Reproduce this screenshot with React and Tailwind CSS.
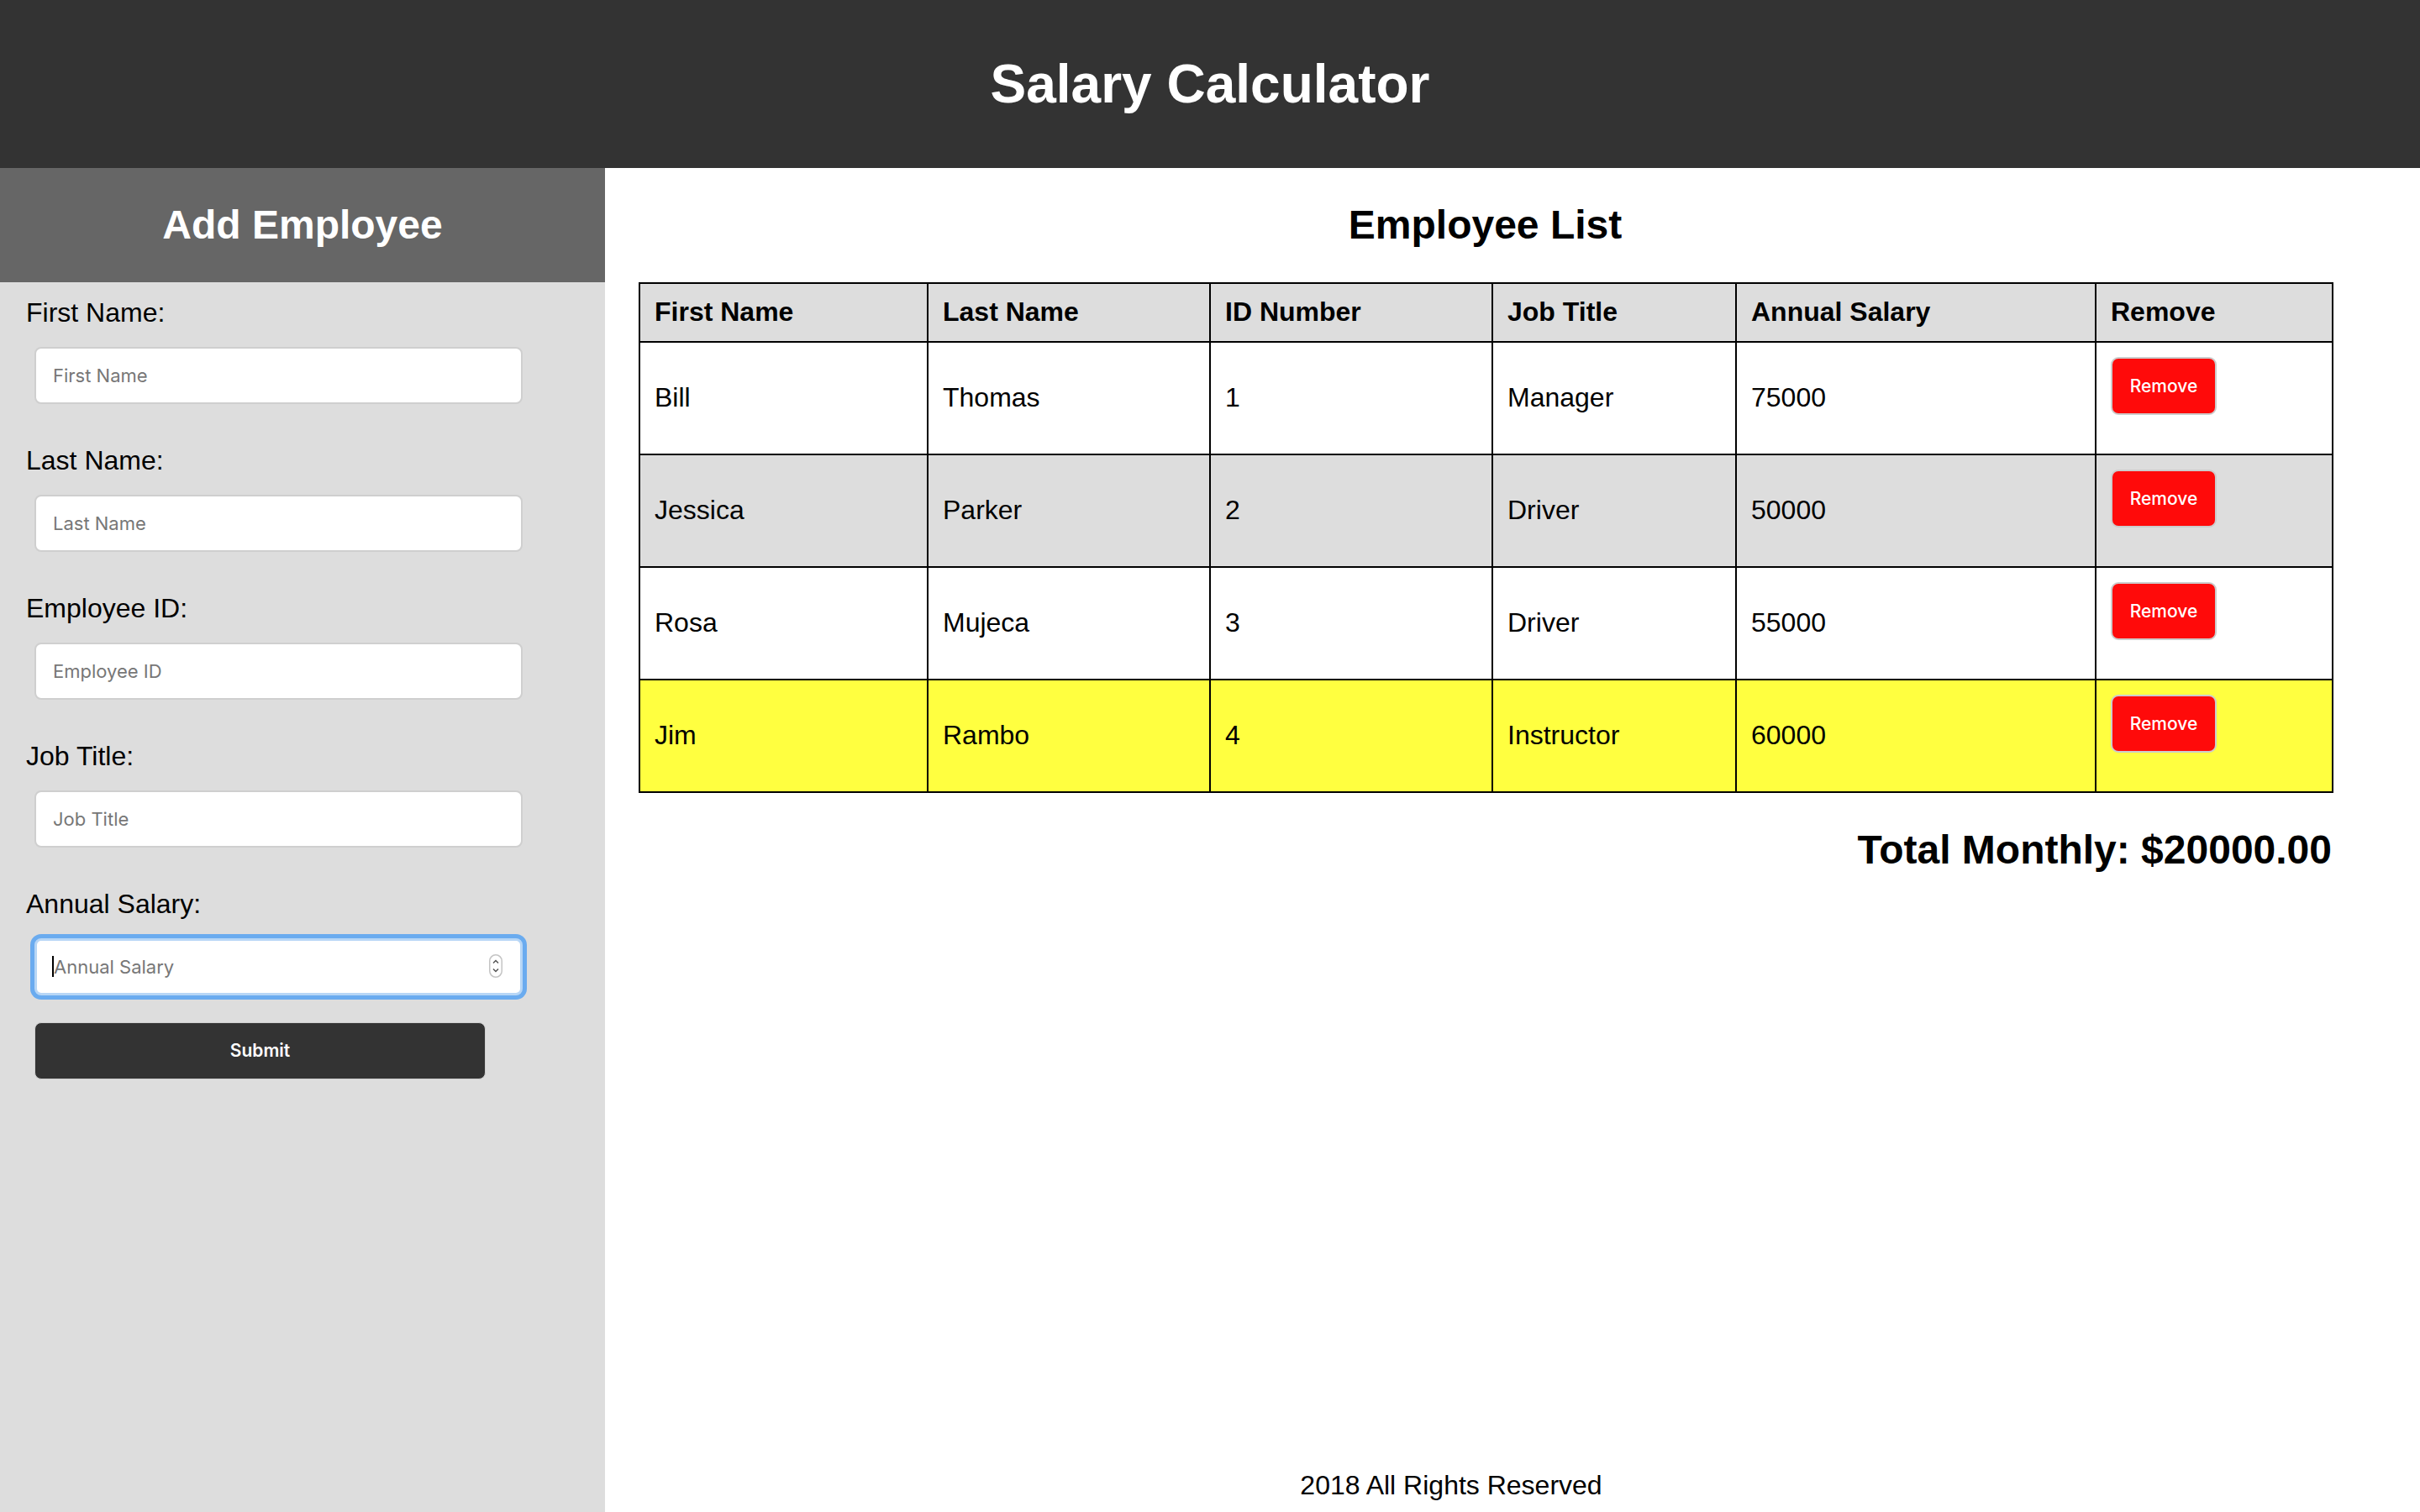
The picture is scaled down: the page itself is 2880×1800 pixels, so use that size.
import React from 'react';

const employees = [
  { first: 'Bill', last: 'Thomas', id: 1, title: 'Manager', salary: 75000, bg: 'bg-white' },
  { first: 'Jessica', last: 'Parker', id: 2, title: 'Driver', salary: 50000, bg: 'bg-[#dddddd]' },
  { first: 'Rosa', last: 'Mujeca', id: 3, title: 'Driver', salary: 55000, bg: 'bg-white' },
  { first: 'Jim', last: 'Rambo', id: 4, title: 'Instructor', salary: 60000, bg: 'bg-[#ffff40]' },
];

const fields = ['First Name', 'Last Name', 'Employee ID', 'Job Title'];

const Field = ({ label }) => (
  <div className="mb-[51px]">
    <label className="block text-[32px] leading-[32px] text-black mb-[25px]">{label}:</label>
    <input
      type="text"
      placeholder={label}
      className="ml-[10px] w-[581px] h-[68px] bg-white border-2 border-[#cfcfcf] rounded-[8px] pl-[20px] text-[22px] font-['Inter',sans-serif] placeholder:text-[#777777] outline-none"
    />
  </div>
);

const App = () => {
  const total = employees.reduce((sum, e) => sum + e.salary, 0) / 12;

  return (
    <div className="min-h-screen flex flex-col font-['Liberation_Sans',Arial,sans-serif] text-black">
      <header className="h-[200px] bg-[#333333] flex items-center justify-center">
        <h1 className="text-[64px] leading-[74px] font-bold text-white">Salary Calculator</h1>
      </header>

      <div className="flex flex-1">
        <aside className="w-[720px] bg-[#dddddd] shrink-0">
          <div className="h-[136px] bg-[#666666] flex items-center justify-center">
            <h2 className="text-[48px] leading-[56px] font-bold text-white">Add Employee</h2>
          </div>
          <form className="pl-[31px] pt-[20px]">
            {fields.map((f) => (
              <Field key={f} label={f} />
            ))}
            <div>
              <label className="block text-[32px] leading-[32px] text-black mb-[25px]">Annual Salary:</label>
              <div className="relative ml-[10px] w-[581px] h-[68px]">
                <input
                  type="text"
                  placeholder="Annual Salary"
                  className="w-full h-full bg-white border-[3px] border-[#b7d6f6] rounded-[8px] pl-[20px] text-[22px] font-['Inter',sans-serif] placeholder:text-[#777777] outline-none shadow-[0_0_0_5px_#6aabef]"
                />
                <span className="absolute left-[21px] top-[21px] w-[2px] h-[25px] bg-black"></span>
                <svg className="absolute right-[24px] top-[19px]" width="16" height="28" viewBox="0 0 16 28">
                  <rect x="0.75" y="0.75" width="14.5" height="26.5" rx="7.25" fill="#fff" stroke="#c4c4c4" strokeWidth="1.5" />
                  <path d="M5 10.5 L8 7.5 L11 10.5" fill="none" stroke="#555" strokeWidth="1.5" />
                  <path d="M5 17.5 L8 20.5 L11 17.5" fill="none" stroke="#555" strokeWidth="1.5" />
                </svg>
              </div>
            </div>
            <button
              type="button"
              className="mt-[32px] ml-[10px] w-[537px] h-[68px] bg-[#333333] rounded-[8px] border border-[#cfcfcf] text-white text-[21px] font-semibold font-['Inter',sans-serif]"
            >
              Submit
            </button>
          </form>
        </aside>

        <main className="flex-1 flex flex-col">
          <div className="ml-[40px] w-[2015px]">
            <div className="h-[136px] flex items-center justify-center">
              <h2 className="text-[48px] leading-[56px] font-bold">Employee List</h2>
            </div>
            <table className="w-[2015px] table-fixed border-collapse border-2 border-black text-[32px] leading-[36px]">
              <colgroup>
                <col className="w-[343px]" />
                <col className="w-[336px]" />
                <col className="w-[336px]" />
                <col className="w-[290px]" />
                <col className="w-[428px]" />
                <col className="w-[282px]" />
              </colgroup>
              <thead>
                <tr className="bg-[#dddddd] h-[70px]">
                  {['First Name', 'Last Name', 'ID Number', 'Job Title', 'Annual Salary', 'Remove'].map((h) => (
                    <th key={h} className="border-2 border-black px-[17px] pb-[3px] text-left font-bold align-middle">
                      {h}
                    </th>
                  ))}
                </tr>
              </thead>
              <tbody>
                {employees.map((e) => (
                  <tr key={e.id} className={`${e.bg} h-[134px]`}>
                    <td className="border-2 border-black px-[17px] pb-[3px] align-middle">{e.first}</td>
                    <td className="border-2 border-black px-[17px] pb-[3px] align-middle">{e.last}</td>
                    <td className="border-2 border-black px-[17px] pb-[3px] align-middle">{e.id}</td>
                    <td className="border-2 border-black px-[17px] pb-[3px] align-middle">{e.title}</td>
                    <td className="border-2 border-black px-[17px] pb-[3px] align-middle">{e.salary}</td>
                    <td className="border-2 border-black px-[17px] pt-[17px] align-top">
                      <button
                        type="button"
                        className="block w-[126px] h-[69px] bg-[#ff0a0a] border-2 border-[#cccccc] rounded-[9px] text-white text-[21px] leading-none font-medium font-['Inter',sans-serif]"
                      >
                        Remove
                      </button>
                    </td>
                  </tr>
                ))}
              </tbody>
            </table>
            <p className="mt-[40px] text-right text-[48px] leading-[56px] font-bold">
              Total Monthly: ${total.toFixed(2)}
            </p>
          </div>
          <div className="flex-1"></div>
          <footer className="pr-[146px] pb-[14px] flex justify-center">
            <p className="text-[32px] leading-[36px]">2018 All Rights Reserved</p>
          </footer>
        </main>
      </div>
    </div>
  );
};

export default App;
